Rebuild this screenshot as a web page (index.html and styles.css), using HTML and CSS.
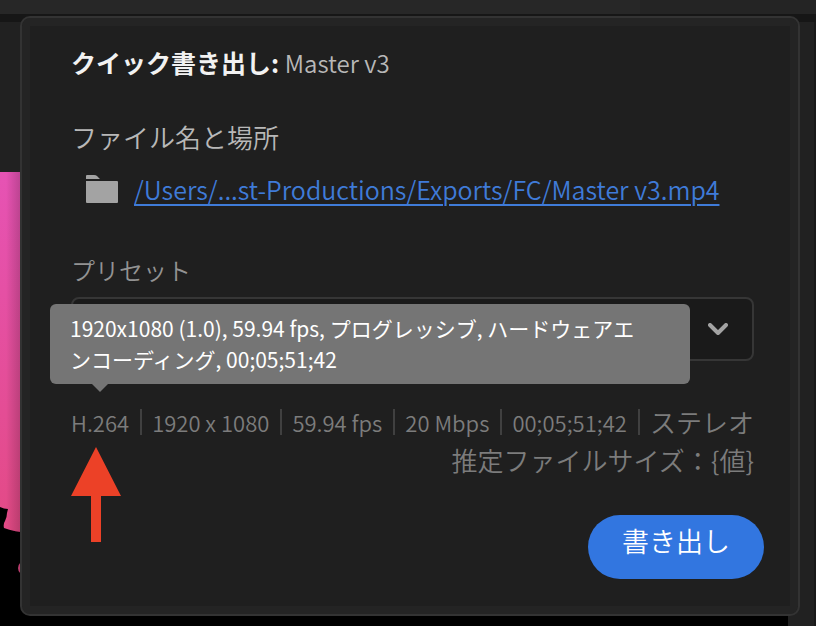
FILE: index.html
```html
<!DOCTYPE html>
<html lang="ja">
<head>
    <meta charset="UTF-8">
    <meta name="viewport" content="width=device-width, initial-scale=1.0">
    <title>クイック書き出し</title>
    <link rel="stylesheet" href="styles.css">
</head>
<body>

<div class="backdrop" aria-hidden="true">
    <div class="backdrop-bar"><div class="backdrop-tab"></div></div>
    <div class="backdrop-main">
        <div class="monitor">
            <svg class="clip" width="30" height="410" viewBox="0 0 30 410">
                <defs>
                    <linearGradient id="pink" x1="0" y1="0" x2="0" y2="1">
                        <stop offset="0" stop-color="#e653b4"/>
                        <stop offset="1" stop-color="#e34a85"/>
                    </linearGradient>
                    <linearGradient id="shade" x1="0" y1="0" x2="1" y2="0">
                        <stop offset="0.2" stop-color="#000" stop-opacity="0"/>
                        <stop offset="0.67" stop-color="#000" stop-opacity="0.18"/>
                    </linearGradient>
                </defs>
                <path fill="url(#pink)" d="M0 0H30V361Q14 360 4 356Q3 352 5 349Q7 345 7 341L8 337Q4 337 0 335Z"/>
                <path fill="url(#shade)" d="M0 0H30V361Q14 360 4 356Q3 352 5 349Q7 345 7 341L8 337Q4 337 0 335Z"/>
                <circle cx="25" cy="396" r="7" fill="#b83c6c"/>
            </svg>
        </div>
        <div class="side"></div>
    </div>
</div>

<form class="dialog" onsubmit="return false">
    <h1 class="title">クイック書き出し: <span class="title-name">Master v3</span></h1>

    <h2 class="label">ファイル名と場所</h2>
    <div class="file">
        <svg class="folder" width="32" height="28" viewBox="0 0 32 28">
            <path fill="#a3a3a3" d="M0 4V1Q0 0 1 0H8Q10 0 11 1L14 4ZM0 6H31Q32 6 32 7V27Q32 28 31 28H1Q0 28 0 27Z"/>
        </svg>
        <a class="path" href="#">/Users/...st-Productions/Exports/FC/Master v3.mp4</a>
    </div>

    <label class="label preset-label" for="preset">プリセット</label>
    <div class="field">
        <select class="preset" id="preset">
            <option></option>
        </select>
        <svg class="chevron" width="20" height="13" viewBox="0 0 20 13">
            <path d="M2 2L10 10L18 2" fill="none" stroke="#a3a3a3" stroke-width="4" stroke-linecap="round" stroke-linejoin="round"/>
        </svg>
    </div>

    <div class="summary">
        <div class="tooltip" role="tooltip">1920x1080 (1.0), 59.94 fps, プログレッシブ, ハードウェアエンコーディング, 00;05;51;42</div>
        <ul class="specs">
            <li>H.264</li>
            <li>1920 x 1080</li>
            <li>59.94 fps</li>
            <li>20 Mbps</li>
            <li>00;05;51;42</li>
            <li class="audio">ステレオ</li>
        </ul>
        <p class="size">推定ファイルサイズ：{値}</p>
        <svg class="pointer" width="50" height="95" viewBox="0 0 50 95">
            <path fill="#ec4127" d="M25 0L50 49H30V95H20V49H0Z"/>
        </svg>
    </div>

    <button class="export" type="submit">書き出し</button>
</form>

</body>
</html>
```
FILE: styles.css
```css
* {
    box-sizing: border-box;
}
body {
    margin: 0;
    min-height: 100vh;
    display: flex;
    background-color: #161616;
    color: #b8b8b8;
    font-family: "Noto Sans CJK JP", sans-serif;
    font-weight: 350;
    font-size: 24px;
    line-height: 36px;
}

/* app window behind the dialog */
.backdrop {
    position: absolute;
    inset: 0;
    display: flex;
    flex-direction: column;
    gap: 8px;
    overflow: hidden;
}
.backdrop-bar {
    height: 14px;
    padding-left: 640px;
    background-color: #272727;
}
.backdrop-tab {
    height: 14px;
    background-color: #242424;
}
.backdrop-main {
    flex: 1;
    display: flex;
}
.monitor {
    flex: 1;
    padding-top: 150px;
    background: linear-gradient(#212121 150px, #000 150px);
}
.clip {
    display: block;
}
.side {
    width: 28px;
    background-color: #212121;
    border-right: 2px solid #191919;
}

.dialog {
    position: relative;
    flex: 1;
    display: flex;
    flex-direction: column;
    margin: 16px 16px 10px 20px;
    padding: 26px 44px 35px 49px;
    background-color: #1f1f1f;
    border: 2px solid #333;
    border-radius: 10px;
    box-shadow: inset 0 0 0 8px #242424;
}
.title {
    margin: 0 0 38px;
    font-size: 25px;
    font-weight: 700;
    color: #f2f2f2;
}
.title-name {
    font-size: 24px;
    font-weight: 350;
    color: #b8b8b8;
}
.label {
    margin: 0;
    font-size: 26px;
    font-weight: 350;
}
.file {
    display: flex;
    align-items: center;
    gap: 16px;
    margin: 16px 0 45px;
    padding-left: 15px;
}
.path {
    font-size: 25px;
    color: #3f7bd8;
    text-decoration-thickness: 2px;
    text-underline-offset: 4px;
    white-space: nowrap;
}
.preset-label {
    font-size: 24px;
    color: #939393;
}
.field {
    display: grid;
    align-items: center;
    margin-top: 9px;
}
.preset,
.chevron {
    grid-area: 1 / 1;
}
.preset {
    width: 100%;
    height: 64px;
    padding: 0 60px 0 20px;
    appearance: none;
    background-color: #1a1a1a;
    border: 2px solid #363636;
    border-radius: 8px;
    color: #b8b8b8;
    font: inherit;
}
.chevron {
    justify-self: end;
    margin-right: 26px;
    pointer-events: none;
}

.summary {
    position: relative;
    margin-top: 42px;
    color: #7c7c7c;
    line-height: 38px;
}
.specs {
    display: flex;
    justify-content: space-between;
    align-items: center;
    margin: 0;
    padding: 0;
    list-style: none;
    font-size: 22px;
    white-space: nowrap;
}
.specs li {
    display: flex;
    align-items: center;
}
.specs li + li::before {
    content: "";
    width: 2px;
    height: 26px;
    margin-right: 10px;
    background-color: #404040;
}
.specs .audio {
    font-size: 26px;
}
.size {
    margin: 0;
    font-size: 26px;
    text-align: right;
}
.tooltip {
    position: absolute;
    left: -21px;
    right: 64px;
    bottom: calc(100% + 19px);
    padding: 9px 36px 9px 20px;
    background-color: #757575;
    border-radius: 6px;
    color: #fff;
    font-size: 21px;
    font-weight: 400;
    line-height: 31px;
    word-break: break-all;
}
.tooltip::after {
    content: "";
    position: absolute;
    top: 100%;
    left: 42px;
    border: 8px solid transparent;
    border-top-color: #757575;
    border-bottom: 0;
}
.pointer {
    position: absolute;
    top: 44px;
    left: 0;
}

.export {
    align-self: flex-end;
    width: 176px;
    height: 64px;
    margin: 36px -10px 0 0;
    padding: 0 0 12px;
    background-color: #3276e0;
    border: 0;
    border-radius: 32px;
    color: #fff;
    font: inherit;
    font-size: 27px;
    cursor: pointer;
}
.export:hover {
    background-color: #2468d4;
}
```
